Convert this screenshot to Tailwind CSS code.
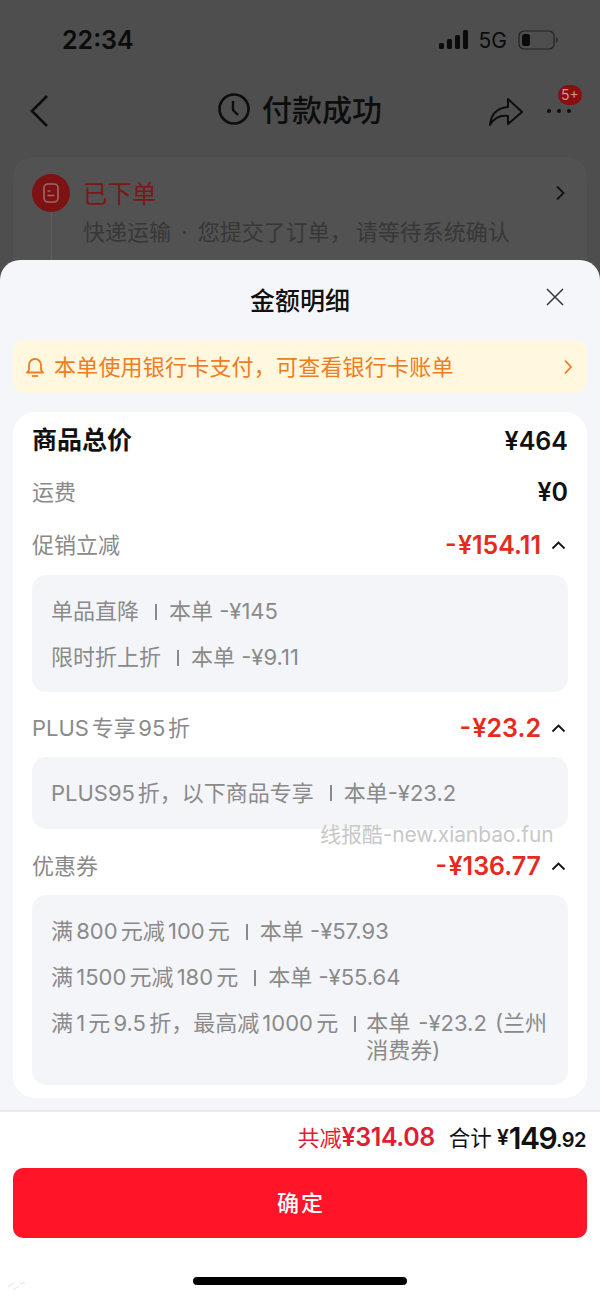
<!DOCTYPE html>
<html lang="zh">
<head>
<meta charset="utf-8">
<script src="https://cdn.jsdelivr.net/npm/@tailwindcss/browser@4"></script>
</head>
<body class="m-0">
<div class="relative w-[600px] h-[1298px] overflow-hidden bg-[#4e4e4e] font-['Inter','Noto_Sans_CJK_SC',sans-serif] flex flex-col">
  <!-- dimmed page -->
  <div class="h-[260px] shrink-0 overflow-hidden">
    <div class="h-[80px] pt-[22px] pl-[62px] pr-[42px] flex justify-between items-start">
      <span class="text-[25px] leading-[36px] font-semibold text-[#0b0b0b]">22:34</span>
      <div class="flex items-center gap-[11px] h-[36px]">
        <svg width="30" height="20" viewBox="0 0 30 20"><g fill="#0b0b0b"><rect x="1" y="13" width="5" height="6" rx="1.5"/><rect x="9" y="9" width="5" height="10" rx="1.5"/><rect x="17" y="5" width="5" height="14" rx="1.5"/><rect x="25" y="0" width="5" height="19" rx="1.5"/></g></svg>
        <span class="text-[21px] leading-none text-[#0b0b0b]">5G</span>
        <svg width="40" height="22" viewBox="0 0 40 22"><rect x="1" y="2" width="35" height="18" rx="5" fill="none" stroke="#222" stroke-width="1.2"/><rect x="4" y="5" width="8" height="12" rx="2.5" fill="#0b0b0b"/><rect x="38" y="8.5" width="1.5" height="5" rx="0.7" fill="#222"/></svg>
      </div>
    </div>
    <div class="relative h-[60px] flex items-center justify-center gap-[12px]">
      <svg class="absolute left-[28px] top-[14px]" width="22" height="34" viewBox="0 0 22 34"><path d="M19 2 4 17l15 15" fill="none" stroke="#0d0d0d" stroke-width="2.6"/></svg>
      <svg width="32" height="34" viewBox="0 0 32 34" class="mb-[3px]"><circle cx="16" cy="17" r="14.5" fill="none" stroke="#0d0d0d" stroke-width="2.6"/><path d="M15 9v9l5 5" fill="none" stroke="#0d0d0d" stroke-width="2.4"/></svg>
      <span class="text-[30px] leading-none font-medium text-[#0d0d0d]">付款成功</span>
      <svg class="absolute left-[488px] top-[14px]" width="36" height="34" viewBox="0 0 36 34"><path d="M2 31C3 20 9 14 20 13V5l14 13-14 12v-8C12 21 6 24 2 31Z" fill="none" stroke="#0d0d0d" stroke-width="2" stroke-linejoin="round"/></svg>
      <div class="absolute left-[547px] top-[29px] flex gap-[6px]">
        <span class="w-[4px] h-[4px] rounded-full bg-[#0d0d0d]"></span><span class="w-[4px] h-[4px] rounded-full bg-[#0d0d0d]"></span><span class="w-[4px] h-[4px] rounded-full bg-[#0d0d0d]"></span>
      </div>
      <span class="absolute left-[558px] top-[5px] w-[24px] h-[20px] rounded-full bg-[#8a0e0e] text-[14px] leading-[20px] text-center text-[#c79a9a]">5+</span>
    </div>
    <div class="relative mx-[13px] mt-[17px] h-[110px] rounded-t-[20px] bg-[#525252]">
      <div class="absolute left-[38px] top-[55px] w-[1px] h-[50px] bg-[#5e5e5e]"></div>
      <div class="absolute left-[19px] top-[17px] w-[38px] h-[38px] rounded-full bg-[#7d1212] flex items-center justify-center">
        <svg width="16" height="20" viewBox="0 0 16 20"><rect x="1" y="1" width="14" height="18" rx="4" fill="none" stroke="#9b6a6a" stroke-width="1.6"/><path d="M4.5 8h3M4.5 12.5h7" stroke="#9b6a6a" stroke-width="1.6"/></svg>
      </div>
      <div class="absolute left-[70px] top-[20px] text-[24.5px] leading-[34px] text-[#7b1818]">已下单</div>
      <svg class="absolute left-[542px] top-[28px]" width="12" height="16" viewBox="0 0 12 16"><path d="m2 1.5 6.5 6.5L2 14.5" fill="none" stroke="#111" stroke-width="1.8"/></svg>
      <div class="absolute left-[70px] top-[59px] text-[22px] leading-[32px] text-[#373737] whitespace-nowrap">快递运输<span class="mx-[4px]"> · </span>您提交了订单，<span class="ml-[4px]">请等待系统确认</span></div>
    </div>
  </div>

  <!-- sheet -->
  <div class="flex-1 rounded-t-[20px] bg-[#f4f6fa] flex flex-col">
    <div class="relative h-[80px] flex items-center justify-center">
      <span class="text-[25px] leading-none font-medium text-[#111] pt-[2px]">金额明细</span>
      <svg class="absolute left-[545px] top-[27px]" width="20" height="20" viewBox="0 0 20 20"><path d="m2 2 16 16M18 2 2 18" stroke="#333" stroke-width="1.5"/></svg>
    </div>
    <div class="mx-[13px] h-[53px] rounded-[12px] bg-[#fff7de] flex items-center pl-[12px] pr-[14px]">
      <svg width="20" height="22" viewBox="0 0 20 22" class="mr-[9px]"><path d="M2 16.5h16l-2-2.5V9a6 6 0 0 0-12 0v5Z" fill="none" stroke="#f07c23" stroke-width="1.8" stroke-linejoin="round"/><path d="M7 20h6" stroke="#f07c23" stroke-width="1.8"/></svg>
      <span class="flex-1 text-[22px] tracking-[0.2px] leading-none text-[#f07c23]">本单使用银行卡支付，可查看银行卡账单</span>
      <svg width="10" height="16" viewBox="0 0 10 16"><path d="m2 1.5 6 6.5-6 6.5" fill="none" stroke="#f07c23" stroke-width="1.8"/></svg>
    </div>
    <div class="mx-[13px] mt-[19px] rounded-[22px] bg-white px-[19px] pt-[12px] pb-[13px]">
      <div class="h-[34px] flex items-center justify-between">
        <span class="text-[25px] font-semibold text-[#111]">商品总价</span>
        <span class="text-[25px] font-semibold text-[#111] pt-[2px]">¥464</span>
      </div>
      <div class="mt-[17px] h-[34px] flex items-center justify-between">
        <span class="text-[22px] text-[#8a8a8a]">运费</span>
        <span class="text-[25px] font-semibold text-[#111] pt-[2px]">¥0</span>
      </div>
      <div class="mt-[19px] h-[34px] flex items-center justify-between">
        <span class="text-[22px] text-[#8a8a8a]">促销立减</span>
        <div class="flex items-center gap-[10px] mr-[2px]">
          <span class="text-[25px] font-semibold text-[#e62a1c] pt-[2px] [word-spacing:-5px]">- ¥154.11</span>
          <svg width="15" height="10" viewBox="0 0 15 10"><path d="m1.5 8.5 6-6 6 6" fill="none" stroke="#111" stroke-width="1.8"/></svg>
        </div>
      </div>
      <div class="mt-[13px] h-[117px] rounded-[14px] bg-[#f4f5f9] px-[19px] pt-[13px] text-[22px] leading-[46px] text-[#8a8a8a]">
        <div class="whitespace-nowrap">单品直降<span class="inline-block w-[2px] h-[16px] bg-[#8a8a8a] ml-[16px] mr-[12px] align-[-1px]"></span>本单 -¥145</div>
        <div class="whitespace-nowrap">限时折上折<span class="inline-block w-[2px] h-[16px] bg-[#8a8a8a] ml-[16px] mr-[12px] align-[-1px]"></span>本单 -¥9.11</div>
      </div>
      <div class="mt-[19px] h-[34px] flex items-center justify-between">
        <span class="text-[22px] text-[#8a8a8a] [word-spacing:-3.5px]">PLUS 专享 95 折</span>
        <div class="flex items-center gap-[10px] mr-[2px]">
          <span class="text-[25px] font-semibold text-[#e62a1c] pt-[2px] [word-spacing:-5px]">- ¥23.2</span>
          <svg width="15" height="10" viewBox="0 0 15 10"><path d="m1.5 8.5 6-6 6 6" fill="none" stroke="#111" stroke-width="1.8"/></svg>
        </div>
      </div>
      <div class="mt-[12px] h-[72px] rounded-[14px] bg-[#f4f5f9] px-[19px] flex items-center text-[22px] text-[#8a8a8a] whitespace-nowrap">
        <span class="[word-spacing:-3.5px]">PLUS95 折，以下商品专享</span><span class="inline-block w-[2px] h-[16px] bg-[#8a8a8a] ml-[16px] mr-[12px]"></span><span>本单-¥23.2</span>
      </div>
      <div class="mt-[20px] h-[34px] flex items-center justify-between">
        <span class="text-[22px] text-[#8a8a8a]">优惠券</span>
        <div class="flex items-center gap-[10px] mr-[2px]">
          <span class="text-[25px] font-semibold text-[#e62a1c] pt-[2px] [word-spacing:-5px]">- ¥136.77</span>
          <svg width="15" height="10" viewBox="0 0 15 10"><path d="m1.5 8.5 6-6 6 6" fill="none" stroke="#111" stroke-width="1.8"/></svg>
        </div>
      </div>
      <div class="mt-[12px] h-[190px] rounded-[14px] bg-[#f4f5f9] px-[19px] pt-[13px] text-[22px] leading-[46px] text-[#8a8a8a]">
        <div class="whitespace-nowrap"><span class="[word-spacing:-3px]">满 800 元减 100 元</span><span class="inline-block w-[2px] h-[16px] bg-[#8a8a8a] ml-[16px] mr-[12px] align-[-1px]"></span>本单 -¥57.93</div>
        <div class="whitespace-nowrap"><span class="[word-spacing:-3px]">满 1500 元减 180 元</span><span class="inline-block w-[2px] h-[16px] bg-[#8a8a8a] ml-[16px] mr-[12px] align-[-1px]"></span>本单 -¥55.64</div>
        <div class="flex mt-[10px] leading-[27px]">
          <span class="whitespace-nowrap"><span class="[word-spacing:-3px]">满 1 元 9.5 折，最高减 1000 元</span><span class="inline-block w-[2px] h-[16px] bg-[#8a8a8a] ml-[16px] mr-[10px] align-[-1px]"></span></span>
          <span class="w-[184px] shrink-0 [word-spacing:2px]">本单 -¥23.2 (兰州消费券)</span>
        </div>
      </div>
    </div>
    <div class="mt-[12px] flex-1 bg-white border-t-2 border-[#e9eaef] flex flex-col">
      <div class="h-[52px] flex items-center justify-end pr-[14px] whitespace-nowrap">
        <span class="text-[22px] text-[#e21c34]">共减</span>
        <span class="text-[25px] font-semibold tracking-[-0.4px] text-[#e21c34]">¥314.08</span>
        <span class="ml-[14px] text-[21.5px] text-[#111]">合计</span>
        <span class="ml-[5px] text-[21px] font-semibold text-[#111]">¥</span>
        <span class="text-[30px] font-semibold tracking-[-1.5px] text-[#111]">149</span>
        <span class="text-[20px] font-semibold tracking-[-0.5px] pt-[3px] text-[#111]">.92</span>
      </div>
      <div class="mt-[4px] mx-[13px] h-[70px] rounded-[10px] bg-[#ff1428] flex items-center justify-center pl-[2px] text-[22px] font-medium tracking-[2px] text-white">确定</div>
      <div class="mt-[39px] mx-auto w-[214px] h-[8px] rounded-full bg-black"></div>
    </div>
  </div>

  <!-- watermark -->
  <div class="absolute left-[320px] top-[821px] text-[21px] leading-[28px] tracking-[-0.1px] text-[#c8c8c8] whitespace-nowrap">线报酷-new.xianbao.fun</div>
  <svg class="absolute left-[7px] top-[1281px]" width="20" height="12" viewBox="0 0 20 12"><path d="M1 6 7 2M6 9l6-4M13 3l5-1" stroke="#ececec" stroke-width="1.5"/></svg>
</div>
</body>
</html>
